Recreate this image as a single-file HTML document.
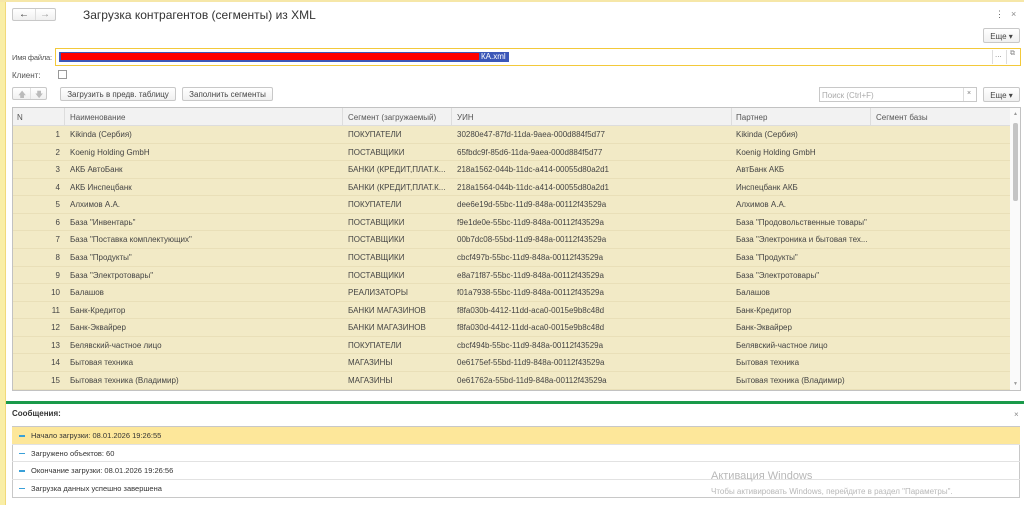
<!DOCTYPE html>
<html><head><meta charset="utf-8"><style>
*{box-sizing:border-box;margin:0;padding:0}
body{width:1024px;height:505px;position:relative;overflow:hidden;background:#fff;font-family:"Liberation Sans","Noto Sans CJK SC",sans-serif;font-size:8px;color:#444}
.a{position:absolute;white-space:nowrap}
.btn{position:absolute;border:1px solid #c8c8c8;border-radius:2px;background:linear-gradient(#fff,#f0f0f0);font-size:8px;color:#444;text-align:center}
.row{position:absolute;left:13px;width:997px;height:17.57px;background:#f2eac6;border-bottom:1px solid #e9dfb8}
.row span{position:absolute;top:4px}
.msg{position:absolute;left:12px;width:1008px;height:17.5px;border-bottom:1px solid #e2e2e2;font-size:7.5px;color:#333}
.msg span{position:absolute;top:4px;left:19px}
.msg i{position:absolute;left:7px;top:8px;width:6px;height:1.5px;background:#3aa0d8}
</style></head><body>
<div class="a" style="left:0;top:0;width:6px;height:505px;background:#f9eea6;border-right:1px solid #f1d97a"></div>
<div class="a" style="left:0;top:0;width:1024px;height:2px;background:#f6e7a8"></div>
<div class="btn" style="left:12px;top:8px;width:44px;height:13px"><span class="a" style="left:6px;top:0;font-size:10px;color:#333">←</span><span class="a" style="left:22px;top:0;height:11px;border-left:1px solid #ddd"></span><span class="a" style="left:27px;top:0;font-size:10px;color:#999">→</span></div>
<div class="a" style="left:83px;top:8px;font-size:12px;color:#333">Загрузка контрагентов (сегменты) из XML</div>
<div class="a" style="left:995px;top:9px;font-size:9px;color:#666">⋮</div>
<div class="a" style="left:1011px;top:9px;font-size:9px;color:#888">×</div>
<div class="btn" style="left:983px;top:28px;width:37px;height:15px;padding-top:3px">Еще ▾</div>
<div class="a" style="left:12px;top:53px;color:#555;font-size:7.5px;letter-spacing:-0.2px">Имя файла:</div>
<div class="a" style="left:55px;top:48px;width:966px;height:18px;border:1px solid #f3c93a"></div>
<div class="a" style="left:59px;top:52px;width:450px;height:10px;background:#3b57b8"></div>
<div class="a" style="left:61px;top:53px;width:418px;height:7px;background:#f00"></div>
<div class="a" style="left:481px;top:52px;color:#fff">КА.xml</div>
<div class="a" style="left:992px;top:50px;height:14px;border-left:1px solid #ddd;color:#888;padding-left:2px">...</div>
<div class="a" style="left:1006px;top:50px;height:14px;border-left:1px solid #ddd;color:#888;padding-left:3px;font-size:7px">⧉</div>
<div class="a" style="left:12px;top:71px;color:#555">Клиент:</div>
<div class="a" style="left:58px;top:70px;width:9px;height:9px;border:1px solid #999;background:#fff"></div>
<div class="btn" style="left:12px;top:87px;width:35px;height:13px;color:#bbb"><span class="a" style="left:5px;top:1px">🡅</span><span class="a" style="left:17px;top:0;height:11px;border-left:1px solid #e0e0e0"></span><span class="a" style="left:22px;top:1px">🡇</span></div>
<div class="btn" style="left:60px;top:87px;width:116px;height:14px;padding-top:2px">Загрузить в предв. таблицу</div>
<div class="btn" style="left:182px;top:87px;width:91px;height:14px;padding-top:2px">Заполнить сегменты</div>
<div class="a" style="left:819px;top:87px;width:158px;height:15px;border:1px solid #c8c8c8;color:#aaa;padding:3px 2px">Поиск (Ctrl+F)</div>
<div class="a" style="left:963px;top:88px;height:13px;border-left:1px solid #ddd;color:#777;padding:2px 0 0 3px;font-size:7px">×</div>
<div class="btn" style="left:983px;top:87px;width:37px;height:15px;padding-top:3px">Еще ▾</div>
<div class="a" style="left:12px;top:107px;width:1009px;height:284px;border:1px solid #c2c2c2;background:#fff"></div>
<div class="a" style="left:13px;top:108px;width:997px;height:18px;background:#f2f2f2;border-bottom:1px solid #ddd;color:#555">
<span class="a" style="left:4px;top:5px">N</span>
<span class="a" style="left:51px;top:0;height:18px;border-left:1px solid #ddd"></span>
<span class="a" style="left:57px;top:5px">Наименование</span>
<span class="a" style="left:329px;top:0;height:18px;border-left:1px solid #ddd"></span>
<span class="a" style="left:335px;top:5px">Сегмент (загружаемый)</span>
<span class="a" style="left:438px;top:0;height:18px;border-left:1px solid #ddd"></span>
<span class="a" style="left:444px;top:5px">УИН</span>
<span class="a" style="left:718px;top:0;height:18px;border-left:1px solid #ddd"></span>
<span class="a" style="left:723px;top:5px">Партнер</span>
<span class="a" style="left:857px;top:0;height:18px;border-left:1px solid #ddd"></span>
<span class="a" style="left:863px;top:5px">Сегмент базы</span>
</div>
<div class="a" style="left:1010px;top:108px;width:10px;height:282px;background:#fafafa"></div>
<div class="a" style="left:1013px;top:123px;width:5px;height:78px;background:#c4c4c4;border-radius:2px"></div>
<div class="a" style="left:1013px;top:111px;font-size:5px;color:#999">▲</div>
<div class="a" style="left:1013px;top:381px;font-size:5px;color:#999">▼</div>
<div id="rows"></div>
<script>
var d=[["Kikinda (Сербия)","ПОКУПАТЕЛИ","30280e47-87fd-11da-9aea-000d884f5d77","Kikinda (Сербия)"],
["Koenig Holding GmbH","ПОСТАВЩИКИ","65fbdc9f-85d6-11da-9aea-000d884f5d77","Koenig Holding GmbH"],
["АКБ АвтоБанк","БАНКИ (КРЕДИТ,ПЛАТ.К...","218a1562-044b-11dc-a414-00055d80a2d1","АвтБанк АКБ"],
["АКБ Инспецбанк","БАНКИ (КРЕДИТ,ПЛАТ.К...","218a1564-044b-11dc-a414-00055d80a2d1","Инспецбанк АКБ"],
["Алхимов А.А.","ПОКУПАТЕЛИ","dee6e19d-55bc-11d9-848a-00112f43529a","Алхимов А.А."],
["База \"Инвентарь\"","ПОСТАВЩИКИ","f9e1de0e-55bc-11d9-848a-00112f43529a","База \"Продовольственные товары\""],
["База \"Поставка комплектующих\"","ПОСТАВЩИКИ","00b7dc08-55bd-11d9-848a-00112f43529a","База \"Электроника и бытовая тех..."],
["База \"Продукты\"","ПОСТАВЩИКИ","cbcf497b-55bc-11d9-848a-00112f43529a","База \"Продукты\""],
["База \"Электротовары\"","ПОСТАВЩИКИ","e8a71f87-55bc-11d9-848a-00112f43529a","База \"Электротовары\""],
["Балашов","РЕАЛИЗАТОРЫ","f01a7938-55bc-11d9-848a-00112f43529a","Балашов"],
["Банк-Кредитор","БАНКИ МАГАЗИНОВ","f8fa030b-4412-11dd-aca0-0015e9b8c48d","Банк-Кредитор"],
["Банк-Эквайрер","БАНКИ МАГАЗИНОВ","f8fa030d-4412-11dd-aca0-0015e9b8c48d","Банк-Эквайрер"],
["Белявский-частное лицо","ПОКУПАТЕЛИ","cbcf494b-55bc-11d9-848a-00112f43529a","Белявский-частное лицо"],
["Бытовая техника","МАГАЗИНЫ","0e6175ef-55bd-11d9-848a-00112f43529a","Бытовая техника"],
["Бытовая техника (Владимир)","МАГАЗИНЫ","0e61762a-55bd-11d9-848a-00112f43529a","Бытовая техника (Владимир)"]];
var h="";
d.forEach(function(r,i){var t=126+i*17.57;var hh=i==14?264-14*17.57:17.57;
h+='<div class="row" style="top:'+t+'px;height:'+hh+'px"><span style="right:950px">'+(i+1)+'</span><span style="left:57px">'+r[0]+'</span><span style="left:335px">'+r[1]+'</span><span style="left:444px">'+r[2]+'</span><span style="left:723px">'+r[3]+'</span></div>';});
document.getElementById("rows").innerHTML=h;
</script>
<div class="a" style="left:6px;top:401px;width:1018px;height:3px;background:#1a9a4a"></div>
<div class="a" style="left:12px;top:409px;font-size:8px;font-weight:bold;color:#333">Сообщения:</div>
<div class="a" style="left:1014px;top:410px;font-size:8px;color:#888">×</div>
<div class="a" style="left:12px;top:426px;width:1008px;height:72px;border:1px solid #c8c8c8"></div>
<div class="msg" style="top:427px;background:#fde79a"><i></i><span>Начало загрузки: 08.01.2026 19:26:55</span></div>
<div class="msg" style="top:444.5px"><i></i><span>Загружено объектов: 60</span></div>
<div class="msg" style="top:462px"><i></i><span>Окончание загрузки: 08.01.2026 19:26:56</span></div>
<div class="msg" style="top:479.5px;border:0"><i></i><span>Загрузка данных успешно завершена</span></div>
<div class="a" style="left:711px;top:470px;font-size:11px;color:#b8b8b8">Активация Windows</div>
<div class="a" style="left:711px;top:487px;font-size:8px;color:#b8b8b8">Чтобы активировать Windows, перейдите в раздел "Параметры".</div>
</body></html>
